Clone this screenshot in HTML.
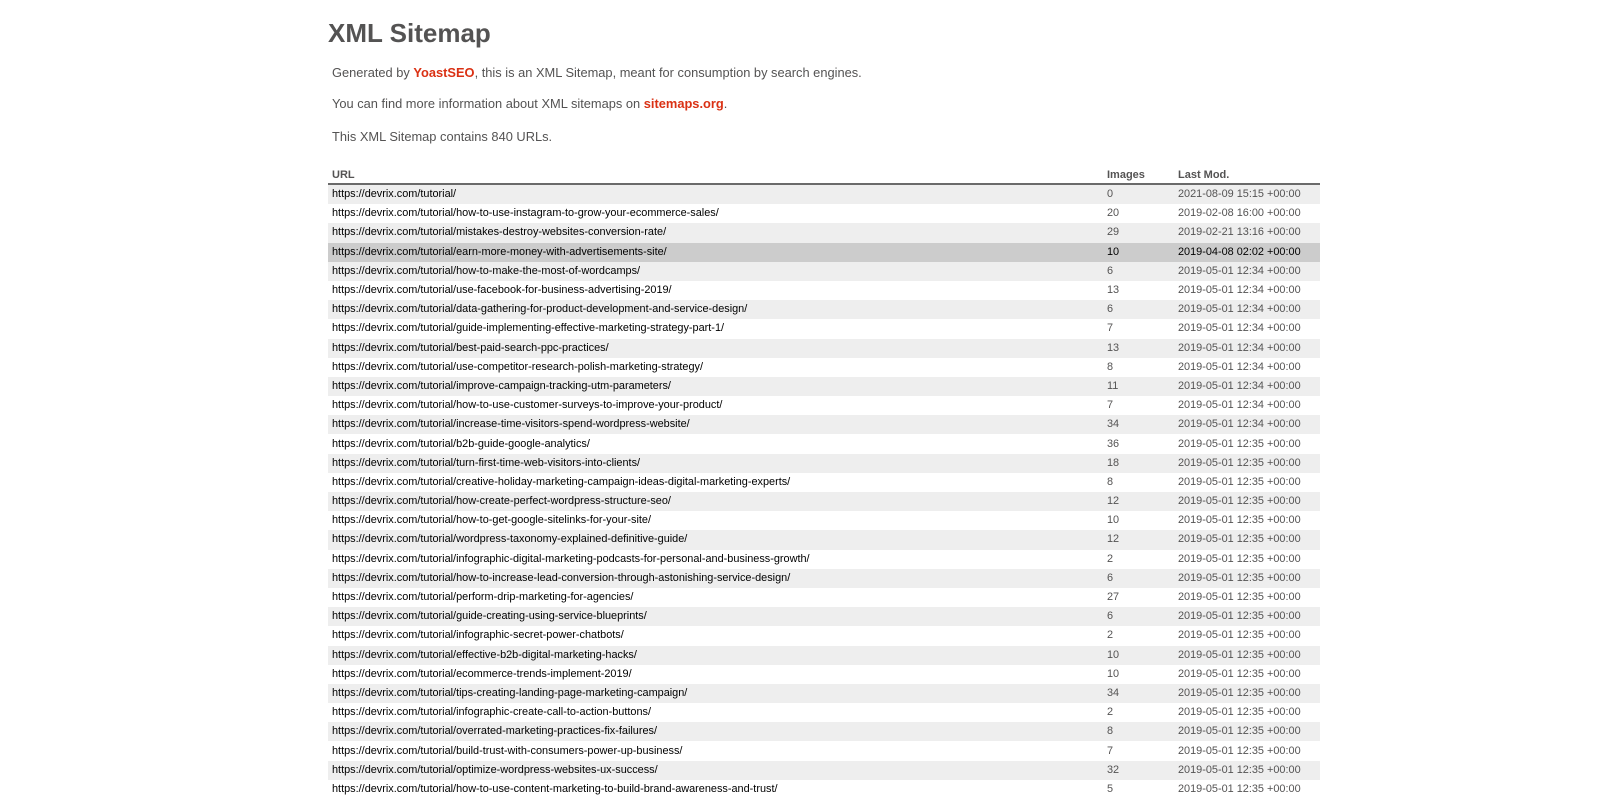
<!DOCTYPE html>
<html><head><meta charset="utf-8"><style>
html,body{margin:0;padding:0;background:#fff;}
body{font-family:"Liberation Sans",Arial,sans-serif;color:#545353;font-size:13px;width:1620px;height:782px;overflow:hidden;position:relative;}
h1{position:absolute;left:328px;top:13px;margin:0;font-size:26px;font-weight:bold;color:#545353;line-height:40px;}
.p{position:absolute;left:332px;margin:0;font-size:12.85px;line-height:16px;}
.p a{color:#da3114;font-weight:bold;text-decoration:none;}
table{position:absolute;left:328px;top:166px;width:992px;border-collapse:collapse;}
th{text-align:left;font-size:11px;font-weight:bold;color:#545353;height:17px;border-bottom:2px solid #6a6a6a;padding:0 0 0 4px;vertical-align:middle;}
td{font-size:10.9px;height:19.2px;padding:0 0 0 4px;line-height:19px;color:#545353;white-space:nowrap;}
td:first-child{color:#000;}
tbody tr:nth-child(odd) td{background:#eee;}
tr.hl td{background:#ccc !important;color:#000;}
</style></head><body>
<h1>XML Sitemap</h1>
<p class="p" style="top:65px">Generated by <a>YoastSEO</a>, this is an XML Sitemap, meant for consumption by search engines.</p>
<p class="p" style="top:96px">You can find more information about XML sitemaps on <a>sitemaps.org</a>.</p>
<p class="p" style="top:129px">This XML Sitemap contains 840 URLs.</p>
<table>
<colgroup><col style="width:775px"><col style="width:71px"><col></colgroup>
<thead><tr><th>URL</th><th>Images</th><th>Last Mod.</th></tr></thead>
<tbody>
<tr><td>https://devrix.com/tutorial/</td><td>0</td><td>2021-08-09 15:15 +00:00</td></tr>
<tr><td>https://devrix.com/tutorial/how-to-use-instagram-to-grow-your-ecommerce-sales/</td><td>20</td><td>2019-02-08 16:00 +00:00</td></tr>
<tr><td>https://devrix.com/tutorial/mistakes-destroy-websites-conversion-rate/</td><td>29</td><td>2019-02-21 13:16 +00:00</td></tr>
<tr class="hl"><td>https://devrix.com/tutorial/earn-more-money-with-advertisements-site/</td><td>10</td><td>2019-04-08 02:02 +00:00</td></tr>
<tr><td>https://devrix.com/tutorial/how-to-make-the-most-of-wordcamps/</td><td>6</td><td>2019-05-01 12:34 +00:00</td></tr>
<tr><td>https://devrix.com/tutorial/use-facebook-for-business-advertising-2019/</td><td>13</td><td>2019-05-01 12:34 +00:00</td></tr>
<tr><td>https://devrix.com/tutorial/data-gathering-for-product-development-and-service-design/</td><td>6</td><td>2019-05-01 12:34 +00:00</td></tr>
<tr><td>https://devrix.com/tutorial/guide-implementing-effective-marketing-strategy-part-1/</td><td>7</td><td>2019-05-01 12:34 +00:00</td></tr>
<tr><td>https://devrix.com/tutorial/best-paid-search-ppc-practices/</td><td>13</td><td>2019-05-01 12:34 +00:00</td></tr>
<tr><td>https://devrix.com/tutorial/use-competitor-research-polish-marketing-strategy/</td><td>8</td><td>2019-05-01 12:34 +00:00</td></tr>
<tr><td>https://devrix.com/tutorial/improve-campaign-tracking-utm-parameters/</td><td>11</td><td>2019-05-01 12:34 +00:00</td></tr>
<tr><td>https://devrix.com/tutorial/how-to-use-customer-surveys-to-improve-your-product/</td><td>7</td><td>2019-05-01 12:34 +00:00</td></tr>
<tr><td>https://devrix.com/tutorial/increase-time-visitors-spend-wordpress-website/</td><td>34</td><td>2019-05-01 12:34 +00:00</td></tr>
<tr><td>https://devrix.com/tutorial/b2b-guide-google-analytics/</td><td>36</td><td>2019-05-01 12:35 +00:00</td></tr>
<tr><td>https://devrix.com/tutorial/turn-first-time-web-visitors-into-clients/</td><td>18</td><td>2019-05-01 12:35 +00:00</td></tr>
<tr><td>https://devrix.com/tutorial/creative-holiday-marketing-campaign-ideas-digital-marketing-experts/</td><td>8</td><td>2019-05-01 12:35 +00:00</td></tr>
<tr><td>https://devrix.com/tutorial/how-create-perfect-wordpress-structure-seo/</td><td>12</td><td>2019-05-01 12:35 +00:00</td></tr>
<tr><td>https://devrix.com/tutorial/how-to-get-google-sitelinks-for-your-site/</td><td>10</td><td>2019-05-01 12:35 +00:00</td></tr>
<tr><td>https://devrix.com/tutorial/wordpress-taxonomy-explained-definitive-guide/</td><td>12</td><td>2019-05-01 12:35 +00:00</td></tr>
<tr><td>https://devrix.com/tutorial/infographic-digital-marketing-podcasts-for-personal-and-business-growth/</td><td>2</td><td>2019-05-01 12:35 +00:00</td></tr>
<tr><td>https://devrix.com/tutorial/how-to-increase-lead-conversion-through-astonishing-service-design/</td><td>6</td><td>2019-05-01 12:35 +00:00</td></tr>
<tr><td>https://devrix.com/tutorial/perform-drip-marketing-for-agencies/</td><td>27</td><td>2019-05-01 12:35 +00:00</td></tr>
<tr><td>https://devrix.com/tutorial/guide-creating-using-service-blueprints/</td><td>6</td><td>2019-05-01 12:35 +00:00</td></tr>
<tr><td>https://devrix.com/tutorial/infographic-secret-power-chatbots/</td><td>2</td><td>2019-05-01 12:35 +00:00</td></tr>
<tr><td>https://devrix.com/tutorial/effective-b2b-digital-marketing-hacks/</td><td>10</td><td>2019-05-01 12:35 +00:00</td></tr>
<tr><td>https://devrix.com/tutorial/ecommerce-trends-implement-2019/</td><td>10</td><td>2019-05-01 12:35 +00:00</td></tr>
<tr><td>https://devrix.com/tutorial/tips-creating-landing-page-marketing-campaign/</td><td>34</td><td>2019-05-01 12:35 +00:00</td></tr>
<tr><td>https://devrix.com/tutorial/infographic-create-call-to-action-buttons/</td><td>2</td><td>2019-05-01 12:35 +00:00</td></tr>
<tr><td>https://devrix.com/tutorial/overrated-marketing-practices-fix-failures/</td><td>8</td><td>2019-05-01 12:35 +00:00</td></tr>
<tr><td>https://devrix.com/tutorial/build-trust-with-consumers-power-up-business/</td><td>7</td><td>2019-05-01 12:35 +00:00</td></tr>
<tr><td>https://devrix.com/tutorial/optimize-wordpress-websites-ux-success/</td><td>32</td><td>2019-05-01 12:35 +00:00</td></tr>
<tr><td>https://devrix.com/tutorial/how-to-use-content-marketing-to-build-brand-awareness-and-trust/</td><td>5</td><td>2019-05-01 12:35 +00:00</td></tr>
</tbody></table>
</body></html>
